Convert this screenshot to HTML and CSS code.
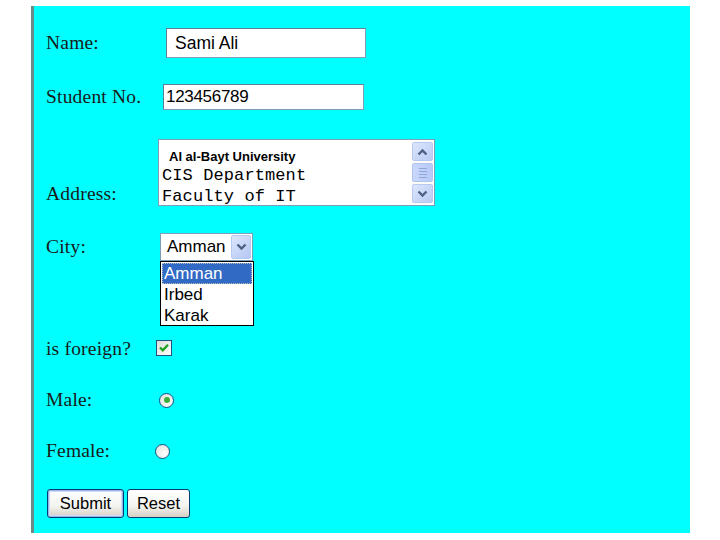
FILE: index.html
```html
<!DOCTYPE html>
<html>
<head>
<meta charset="utf-8">
<link rel="stylesheet" href="styles.css">
</head>
<body>
<form class="panel">
  <div class="row r1">
    <span class="label">Name:</span>
    <div class="field name-field">Sami Ali</div>
  </div>
  <div class="row r2">
    <span class="label">Student No.</span>
    <div class="field num-field">123456789</div>
  </div>
  <div class="row r3">
    <span class="label label-low">Address:</span>
    <div class="textarea">
      <div class="ta-text">
        <div class="ta-bold">Al al-Bayt University</div>
        <div class="ta-mono">CIS Department</div>
        <div class="ta-mono">Faculty of IT</div>
      </div>
      <div class="scrollbar">
        <div class="sb-btn"><svg width="11" height="8" viewBox="0 0 11 8"><path d="M1.5 6.5 L5.5 2.5 L9.5 6.5" fill="none" stroke="#4d6185" stroke-width="2.4"/></svg></div>
        <div class="sb-track"><div class="sb-thumb"><span></span><span></span><span></span><span></span></div></div>
        <div class="sb-btn"><svg width="11" height="8" viewBox="0 0 11 8"><path d="M1.5 1.5 L5.5 5.5 L9.5 1.5" fill="none" stroke="#4d6185" stroke-width="2.4"/></svg></div>
      </div>
    </div>
  </div>
  <div class="row r4">
    <span class="label">City:</span>
    <div class="select-wrap">
      <div class="select">
        <span class="select-val">Amman</span>
        <div class="select-btn"><svg width="11" height="8" viewBox="0 0 11 8"><path d="M1.5 1.5 L5.5 5.5 L9.5 1.5" fill="none" stroke="#4d6185" stroke-width="2.4"/></svg></div>
      </div>
      <div class="listbox">
        <div class="opt opt-sel">Amman</div>
        <div class="opt">Irbed</div>
        <div class="opt">Karak</div>
      </div>
    </div>
  </div>
  <div class="row r5">
    <span class="label">is foreign?</span>
    <div class="checkbox"><svg width="12" height="12" viewBox="0 0 12 12"><path d="M2 5.5 L4.8 8.3 L10 2.8" fill="none" stroke="#21a121" stroke-width="2.4"/></svg></div>
  </div>
  <div class="row r6">
    <span class="label">Male:</span>
    <div class="radio radio-male"><span class="dot"></span></div>
  </div>
  <div class="row r7">
    <span class="label">Female:</span>
    <div class="radio radio-female"></div>
  </div>
  <div class="row r8">
    <div class="btn btn-default">Submit</div>
    <div class="btn btn-reset">Reset</div>
  </div>
</form>
</body>
</html>
```
FILE: styles.css
```css
* { box-sizing: border-box; }
html, body { margin: 0; padding: 0; background: #ffffff; }
body { width: 720px; height: 540px; overflow: hidden; }

.panel {
  margin: 6px 0 0 31px;
  width: 659px;
  height: 527px;
  background: #00ffff;
  border-left: 3px solid #6a8c88;
  padding-left: 12px;
  display: flex;
  flex-direction: column;
}

.row { display: flex; align-items: center; }
.r1 { height: 74px; }
.r2 { height: 34px; }
.r3 { height: 117px; }
.r4 { height: 95px; align-items: flex-start; padding-top: 2px; }
.r5 { height: 46px; }
.r6 { height: 56px; }
.r7 { height: 46px; }
.r8 { height: 58px; padding-left: 1px; gap: 3px; }

.label {
  font-family: "Liberation Serif", "Times New Roman", serif;
  font-size: 19.5px;
  letter-spacing: 0.2px;
  color: #1a1a1a;
  width: 110px;
  flex: none;
  line-height: 28px;
}
.label-low { align-self: flex-end; margin-bottom: 23px; }

.field {
  background: #fff;
  border: 1px solid #7f9db9;
  border-top-color: #5c7f93;
  border-left-color: #5c7f93;
  font-family: "Liberation Sans", Arial, sans-serif;
  color: #000;
  display: flex;
  align-items: center;
}
.name-field {
  margin-left: 10px;
  width: 200px;
  height: 30px;
  padding-left: 8px;
  font-size: 17.5px;
}
.num-field {
  margin-left: 7px;
  width: 201px;
  height: 26px;
  padding-left: 2px;
  font-size: 17px;
  letter-spacing: -0.3px;
}

.textarea {
  margin-left: 2px;
  width: 277px;
  height: 67px;
  background: #fff;
  border: 1px solid #7f9db9;
  display: flex;
  justify-content: space-between;
  padding: 1px 1px 1px 3px;
}
.ta-text { padding-top: 8px; }
.ta-bold {
  font-family: "Liberation Sans", Arial, sans-serif;
  font-weight: bold;
  font-size: 13px;
  line-height: 16px;
  padding-left: 7px;
}
.ta-mono {
  font-family: "Liberation Mono", "Courier New", monospace;
  font-size: 17px;
  line-height: 21px;
  letter-spacing: 0.1px;
}
.scrollbar {
  width: 21px;
  display: flex;
  flex-direction: column;
  background: #fbfbf8;
  padding: 1px 0;
}
.sb-btn {
  height: 19px;
  background: linear-gradient(135deg, #dce6fd, #b9cbf3);
  border: 1px solid #b7c9f3;
  border-radius: 2px;
  display: flex;
  align-items: center;
  justify-content: center;
}
.sb-track { flex: 1; display: flex; align-items: center; padding: 2px 0; }
.sb-thumb {
  width: 100%;
  height: 19px;
  background: linear-gradient(90deg, #c9d8fc, #b7c9f6);
  border: 1px solid #b0c4f1;
  border-radius: 2px;
  display: flex;
  flex-direction: column;
  align-items: center;
  justify-content: center;
  gap: 2px;
}
.sb-thumb span { display: block; width: 8px; height: 1px; background: #8fa6da; }

.select-wrap { margin-left: 4px; display: flex; flex-direction: column; }
.select {
  width: 93px;
  height: 28px;
  background: #fff;
  border: 1px solid #7f9db9;
  display: flex;
  align-items: center;
  justify-content: space-between;
  padding: 1px;
}
.select-val {
  font-family: "Liberation Sans", Arial, sans-serif;
  font-size: 17px;
  padding-left: 5px;
}
.select-btn {
  width: 20px;
  height: 24px;
  background: linear-gradient(135deg, #dce6fd, #b4c7f3);
  border: 1px solid #b7c9f3;
  border-radius: 2px;
  display: flex;
  align-items: center;
  justify-content: center;
}
.listbox {
  width: 94px;
  height: 65px;
  background: #fff;
  border: 1px solid #000;
  padding: 1px;
}
.opt {
  font-family: "Liberation Sans", Arial, sans-serif;
  font-size: 17px;
  line-height: 21px;
  height: 21px;
  padding-left: 2px;
  color: #000;
}
.opt-sel {
  background: #316ac5;
  color: #fff;
  outline: 1px dotted #c0c0c0;
  outline-offset: -1px;
}

.checkbox {
  width: 16px;
  height: 16px;
  border: 1px solid #1c5180;
  background: linear-gradient(135deg, #dcdcd7, #ffffff);
  display: flex;
  align-items: center;
  justify-content: center;
  margin-top: -2px;
}

.radio {
  width: 15px;
  height: 15px;
  border-radius: 50%;
  border: 1px solid #1c5180;
  background: radial-gradient(circle at 65% 65%, #ffffff, #dcdcd7);
  display: flex;
  align-items: center;
  justify-content: center;
}
.radio-male { margin-left: 3px; }
.radio-female { margin-left: -1px; }
.dot {
  width: 6px;
  height: 6px;
  border-radius: 50%;
  background: #3cae3c;
}

.btn {
  height: 29px;
  border: 1px solid #003c74;
  border-radius: 3px;
  background: linear-gradient(180deg, #ffffff 0%, #f3f3ef 60%, #d6d0c5 100%);
  font-family: "Liberation Sans", Arial, sans-serif;
  font-size: 16.5px;
  display: flex;
  align-items: center;
  justify-content: center;
  color: #000;
}
.btn-default {
  width: 77px;
  box-shadow: inset 0 0 0 1px #98b4e8, inset 0 0 0 2px #cddcf6;
}
.btn-reset { width: 63px; }
```
